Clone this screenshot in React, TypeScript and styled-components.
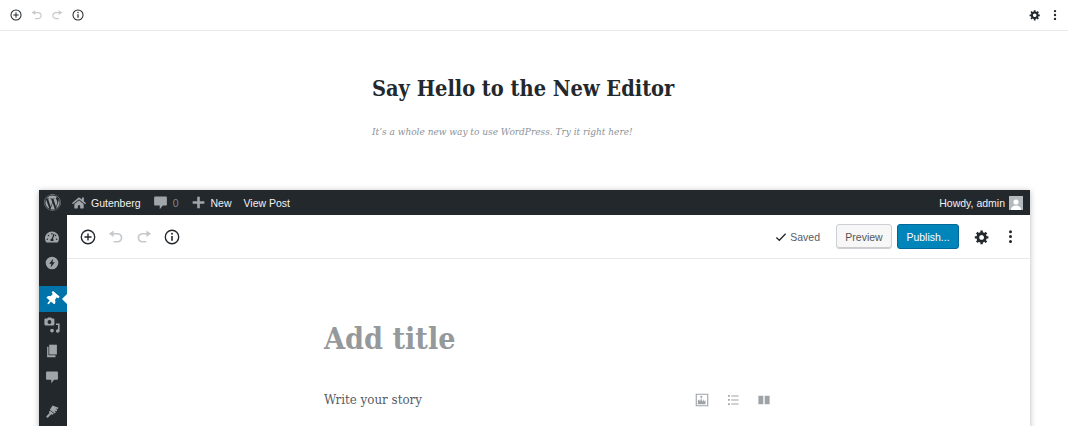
import React from "react";
import styled, { createGlobalStyle } from "styled-components";
import { FaWordpress, FaHome, FaThumbtack, FaTachometerAlt } from "react-icons/fa";

const Global = createGlobalStyle`
  html, body { margin: 0; padding: 0; background: #fff; height: 426px; overflow: hidden; }
  * { box-sizing: border-box; }
`;

const serif = `"DejaVu Serif Condensed", "DejaVu Serif", "Liberation Serif", serif`;
const sans = `"Liberation Sans", Arial, sans-serif`;

const InserterIcon = ({ size }: { size: number }) => (
  <svg width={size} height={size} viewBox="0 0 20 20" fill="none" stroke="currentColor">
    <circle cx="10" cy="10" r="8.4" strokeWidth="1.7" />
    <path d="M10 5.600v8.800M5.600 10h8.800" strokeWidth="1.7" />
  </svg>
);
const UndoIcon = ({ size }: { size: number }) => (
  <svg width={size} height={size} viewBox="0 0 20 20" fill="currentColor">
    <path d="M12 5H7V2L1 6l6 4V7h5c2.200 0 4 1.800 4 4s-1.800 4-4 4H7v2h5c3.300 0 6-2.700 6-6s-2.700-6-6-6z" />
  </svg>
);
const RedoIcon = ({ size }: { size: number }) => (
  <svg width={size} height={size} viewBox="0 0 20 20" fill="currentColor">
    <path d="M8 5h5V2l6 4-6 4V7H8c-2.200 0-4 1.800-4 4s1.800 4 4 4h5v2H8c-3.300 0-6-2.700-6-6s2.700-6 6-6z" />
  </svg>
);
const InfoIcon = ({ size }: { size: number }) => (
  <svg width={size} height={size} viewBox="0 0 20 20" fill="none" stroke="currentColor">
    <circle cx="10" cy="10" r="8.4" strokeWidth="1.7" />
    <path d="M10 8.600v6" strokeWidth="2" />
    <circle cx="10" cy="5.900" r="1.200" fill="currentColor" stroke="none" />
  </svg>
);
const GearIcon = ({ size }: { size: number }) => (
  <svg width={size} height={size} viewBox="0 0 20 20" fill="currentColor">
    <path d="M18 12h-2.180c-.17.700-.44 1.350-.81 1.930l1.540 1.540-2.100 2.100-1.540-1.540c-.58.360-1.230.630-1.910.790V19H8v-2.180c-.68-.16-1.330-.43-1.910-.79l-1.540 1.540-2.120-2.120 1.540-1.540c-.36-.58-.63-1.230-.79-1.910H1V9.030h2.170c.16-.7.440-1.350.800-1.940L2.430 5.550l2.100-2.100 1.540 1.540c.59-.37 1.240-.64 1.930-.81V2h3v2.180c.68.160 1.330.430 1.910.790l1.540-1.540 2.120 2.120-1.540 1.540c.360.590.640 1.240.800 1.940H18V12zm-8.500 1.500c1.660 0 3-1.340 3-3s-1.340-3-3-3-3 1.340-3 3 1.340 3 3 3z" />
  </svg>
);
const DotsIcon = ({ size }: { size: number }) => (
  <svg width={size} height={size} viewBox="0 0 20 20" fill="currentColor">
    <circle cx="10" cy="3.500" r="2" />
    <circle cx="10" cy="10" r="2" />
    <circle cx="10" cy="16.500" r="2" />
  </svg>
);
const BubbleIcon = ({ size }: { size: number }) => (
  <svg width={size} height={size} viewBox="0 0 20 20" fill="currentColor">
    <path d="M3 2h14c.8 0 1.500.7 1.500 1.500v9c0 .8-.7 1.500-1.500 1.500h-4l-4 5v-5H3c-.8 0-1.500-.7-1.500-1.500v-9C1.500 2.700 2.200 2 3 2z" />
  </svg>
);
const PlusIcon = ({ size }: { size: number }) => (
  <svg width={size} height={size} viewBox="0 0 20 20" fill="currentColor">
    <path d="M8 1h4v7h7v4h-7v7H8v-7H1V8h7z" />
  </svg>
);
const UpdatesIcon = ({ size }: { size: number }) => (
  <svg width={size} height={size} viewBox="0 0 20 20" fill="currentColor">
    <path fillRule="evenodd" d="M10 1a9 9 0 1 1 0 18 9 9 0 0 1 0-18zM11.500 4L6 11h3l-1 5.500L14 9h-3.200z" />
  </svg>
);
const MediaIcon = ({ size }: { size: number }) => (
  <svg width={size} height={size} viewBox="0 0 20 20" fill="currentColor">
    <path fillRule="evenodd" d="M2 2h2l1-1.500h4L10 2h1.500c.8 0 1.500.7 1.500 1.500V9c0 .8-.7 1.500-1.500 1.500H2c-.8 0-1.500-.7-1.500-1.500V3.500C.500 2.700 1.200 2 2 2zm4.800 1.800a2.400 2.400 0 1 0 0 4.800 2.400 2.400 0 0 0 0-4.800z" />
    <path d="M15 8h4.500v9.500a2.300 2.300 0 1 1-2-2.300V10H15z" />
    <circle cx="10" cy="17" r="2.300" />
  </svg>
);
const PagesIcon = ({ size }: { size: number }) => (
  <svg width={size} height={size} viewBox="0 0 20 20" fill="currentColor">
    <path d="M6 1h11v14H6z" />
    <path d="M3 4h2v12h10v3H3z" />
  </svg>
);
const BrushIcon = ({ size }: { size: number }) => (
  <svg width={size} height={size} viewBox="0 0 20 20" fill="currentColor">
    <path d="M10 2l8 3-1 1.500-3-.5 2.500 2-1 1.500-3-1 2 2.500-1.500 1.500-6.500-5z" />
    <path d="M6.800 8.500l5 4.500-1.800 1.200-1.800-.7L3.500 18.500 1.500 16.500 6 12l-.7-1.800z" />
  </svg>
);
const ImageBlockIcon = ({ size }: { size: number }) => (
  <svg width={size} height={size} viewBox="0 0 20 20" fill="currentColor">
    <path fillRule="evenodd" d="M1 1h18v18H1zM2.600 2.600v14.800h14.800V2.600z" />
    <path d="M4 16v-5l2-2 1 3 2-5 1.500 6 1.500-4 1 3 2-2v6z" />
    <circle cx="9" cy="5.500" r="1.500" />
  </svg>
);
const ListBlockIcon = ({ size }: { size: number }) => (
  <svg width={size} height={size} viewBox="0 0 20 20" fill="currentColor">
    <path d="M3 3h2.500v2.500H3zM7.500 3.500H18v1.500H7.500zM3 8.700h2.500v2.500H3zM7.500 9.200H18v1.500H7.500zM3 14.500h2.500V17H3zM7.500 15H18v1.500H7.500z" />
  </svg>
);
const ColumnsBlockIcon = ({ size }: { size: number }) => (
  <svg width={size} height={size} viewBox="0 0 20 20" fill="currentColor">
    <path d="M2 4h7v12H2zM11 4h7v12h-7z" />
  </svg>
);

const Page = styled.div`
  width: 1068px;
  height: 426px;
  overflow: hidden;
  background: #fff;
`;

const TopBar = styled.header`
  height: 31px;
  display: flex;
  align-items: center;
  justify-content: space-between;
  padding: 0 7px 1px 10px;
  border-bottom: 1px solid #e8eaeb;
`;

const IconGroup = styled.div<{ $gap: number; $left?: number }>`
  display: flex;
  align-items: center;
  gap: ${(p) => p.$gap}px;
  margin-left: ${(p) => p.$left ?? 0}px;
`;

const ToolIcon = styled.span<{ $muted?: boolean }>`
  display: flex;
  color: ${(p) => (p.$muted ? "#c6c9cc" : "#23282d")};
`;

const Intro = styled.section`
  width: 324px;
  margin: 0 auto;
  padding-top: 43px;
  height: 159px;
`;

const Heading = styled.h1`
  margin: 0;
  font-family: ${serif};
  font-weight: 700;
  font-size: 21.6px;
  line-height: 30px;
  color: #23282d;
  white-space: nowrap;
`;

const Lead = styled.p`
  margin: 20px 0 0;
  font-family: ${serif};
  font-style: italic;
  font-size: 10px;
  line-height: 16px;
  color: #8b9298;
  white-space: nowrap;
`;

const Frame = styled.div`
  width: 991px;
  height: 260px;
  margin-left: 39px;
  box-shadow: 0 1px 6px rgba(0, 0, 0, 0.28);
  display: flex;
  flex-direction: column;
`;

const AdminBar = styled.div`
  height: 25px;
  flex: none;
  background: #23282d;
  display: flex;
  align-items: center;
  padding-right: 7px;
  font-family: ${sans};
  font-size: 10.5px;
  color: #f1f1f1;
`;

const BarLogo = styled.span`
  width: 26px;
  display: flex;
  justify-content: center;
  color: #a0a5aa;
`;

const BarItem = styled.span<{ $left: number; $gap?: number }>`
  display: flex;
  align-items: center;
  gap: ${(p) => p.$gap ?? 5}px;
  margin-left: ${(p) => p.$left}px;
`;

const BarIcon = styled.span`
  display: flex;
  color: #a0a5aa;
`;

const BarCount = styled.span`
  color: #82878c;
`;

const Howdy = styled.span`
  margin-left: auto;
  display: flex;
  align-items: center;
  gap: 4px;
`;

const Avatar = styled.span`
  width: 14px;
  height: 14px;
  background: #b4b9be;
  display: flex;
  align-items: flex-end;
  justify-content: center;
  color: #fff;
  overflow: hidden;
`;

const Body = styled.div`
  flex: 1;
  display: flex;
  min-height: 0;
`;

const Sidebar = styled.nav`
  width: 28px;
  flex: none;
  background: #23282d;
  padding-top: 9px;
`;

const SideItem = styled.div<{ $active?: boolean; $gapBefore?: number }>`
  position: relative;
  height: 26px;
  margin-top: ${(p) => p.$gapBefore ?? 0}px;
  padding-right: 2px;
  display: flex;
  align-items: center;
  justify-content: center;
  color: ${(p) => (p.$active ? "#fff" : "#a0a5aa")};
  background: ${(p) => (p.$active ? "#0073aa" : "transparent")};

  ${(p) =>
    p.$active &&
    `&::after {
      content: "";
      position: absolute;
      right: 0;
      top: 8px;
      border: 5px solid transparent;
      border-right-color: #fff;
      border-left-width: 0;
    }`}
`;

const Pin = styled(FaThumbtack)`
  transform: rotate(40deg);
`;

const Editor = styled.main`
  flex: 1;
  background: #fff;
  display: flex;
  flex-direction: column;
`;

const EditorBar = styled.div`
  height: 44px;
  flex: none;
  display: flex;
  align-items: center;
  justify-content: space-between;
  padding: 0 12px 0 13px;
  border-bottom: 1px solid #e8eaeb;
`;

const Actions = styled.div`
  display: flex;
  align-items: center;
  font-family: ${sans};
  font-size: 10.5px;
`;

const SavedNote = styled.span`
  display: flex;
  align-items: center;
  gap: 3px;
  color: #555d66;
  margin-right: 16px;
`;

const Button = styled.span<{ $primary?: boolean }>`
  height: 25px;
  display: flex;
  align-items: center;
  justify-content: center;
  border-radius: 3px;
  border: 1px solid ${(p) => (p.$primary ? "#006799" : "#ccd0d4")};
  background: ${(p) => (p.$primary ? "#0085ba" : "#f7f7f7")};
  color: ${(p) => (p.$primary ? "#fff" : "#555")};
  box-shadow: ${(p) => (p.$primary ? "none" : "inset 0 -1px 0 #ccc")};
  width: ${(p) => (p.$primary ? 62 : 56)}px;
  margin-left: ${(p) => (p.$primary ? 5 : 0)}px;
`;

const Content = styled.div`
  width: 455px;
  margin-left: 257px;
  padding-top: 61px;
`;

const TitleField = styled.div`
  font-family: ${serif};
  font-weight: 700;
  font-size: 30.2px;
  line-height: 38px;
  color: #96999c;
`;

const StoryRow = styled.div`
  margin-top: 33px;
  display: flex;
  align-items: center;
  justify-content: space-between;
  font-family: ${serif};
  font-size: 13.2px;
  line-height: 18px;
  color: #555d66;
`;

const BlockIcons = styled.div`
  display: flex;
  gap: 17px;
  color: #9ea3a8;
  padding-right: 8px;
`;

export default function App() {
  return (
    <Page>
      <Global />
      <TopBar>
        <IconGroup $gap={8.5}>
          <ToolIcon><InserterIcon size={12} /></ToolIcon>
          <ToolIcon $muted><UndoIcon size={12} /></ToolIcon>
          <ToolIcon $muted><RedoIcon size={12} /></ToolIcon>
          <ToolIcon><InfoIcon size={12} /></ToolIcon>
        </IconGroup>
        <IconGroup $gap={8}>
          <ToolIcon><GearIcon size={12} /></ToolIcon>
          <ToolIcon><DotsIcon size={12} /></ToolIcon>
        </IconGroup>
      </TopBar>
      <Intro>
        <Heading>Say Hello to the New Editor</Heading>
        <Lead>It’s a whole new way to use WordPress. Try it right here!</Lead>
      </Intro>
      <Frame>
        <AdminBar>
          <BarLogo><FaWordpress size={17} /></BarLogo>
          <BarItem $left={7}>
            <BarIcon><FaHome size={14} /></BarIcon>
            Gutenberg
          </BarItem>
          <BarItem $left={12}>
            <BarIcon><BubbleIcon size={15} /></BarIcon>
            <BarCount>0</BarCount>
          </BarItem>
          <BarItem $left={14}>
            <BarIcon><PlusIcon size={13} /></BarIcon>
            New
          </BarItem>
          <BarItem $left={12}>View Post</BarItem>
          <Howdy>
            Howdy, admin
            <Avatar>
              <svg width="12" height="12" viewBox="0 0 12 12" fill="currentColor">
                <circle cx="6" cy="4" r="2.600" />
                <path d="M1 12c0-3 2-4.500 5-4.500s5 1.500 5 4.500z" />
              </svg>
            </Avatar>
          </Howdy>
        </AdminBar>
        <Body>
          <Sidebar>
            <SideItem><FaTachometerAlt size={14} /></SideItem>
            <SideItem><UpdatesIcon size={14} /></SideItem>
            <SideItem $active $gapBefore={10}><Pin size={14} /></SideItem>
            <SideItem><MediaIcon size={16} /></SideItem>
            <SideItem><PagesIcon size={14} /></SideItem>
            <SideItem><BubbleIcon size={14} /></SideItem>
            <SideItem $gapBefore={8}><BrushIcon size={15} /></SideItem>
          </Sidebar>
          <Editor>
            <EditorBar>
              <IconGroup $gap={12}>
                <ToolIcon><InserterIcon size={16} /></ToolIcon>
                <ToolIcon $muted><UndoIcon size={16} /></ToolIcon>
                <ToolIcon $muted><RedoIcon size={16} /></ToolIcon>
                <ToolIcon><InfoIcon size={16} /></ToolIcon>
              </IconGroup>
              <Actions>
                <SavedNote>
                  <svg width="12" height="12" viewBox="0 0 13 13" fill="none" stroke="#23282d" strokeWidth="1.400">
                    <path d="M1.500 7l3.200 3L11.500 3" />
                  </svg>
                  Saved
                </SavedNote>
                <Button>Preview</Button>
                <Button $primary>Publish...</Button>
                <IconGroup $gap={13} $left={15}>
                  <ToolIcon><GearIcon size={16} /></ToolIcon>
                  <ToolIcon><DotsIcon size={15} /></ToolIcon>
                </IconGroup>
              </Actions>
            </EditorBar>
            <Content>
              <TitleField>Add title</TitleField>
              <StoryRow>
                Write your story
                <BlockIcons>
                  <ImageBlockIcon size={14} />
                  <ListBlockIcon size={14} />
                  <ColumnsBlockIcon size={14} />
                </BlockIcons>
              </StoryRow>
            </Content>
          </Editor>
        </Body>
      </Frame>
    </Page>
  );
}
